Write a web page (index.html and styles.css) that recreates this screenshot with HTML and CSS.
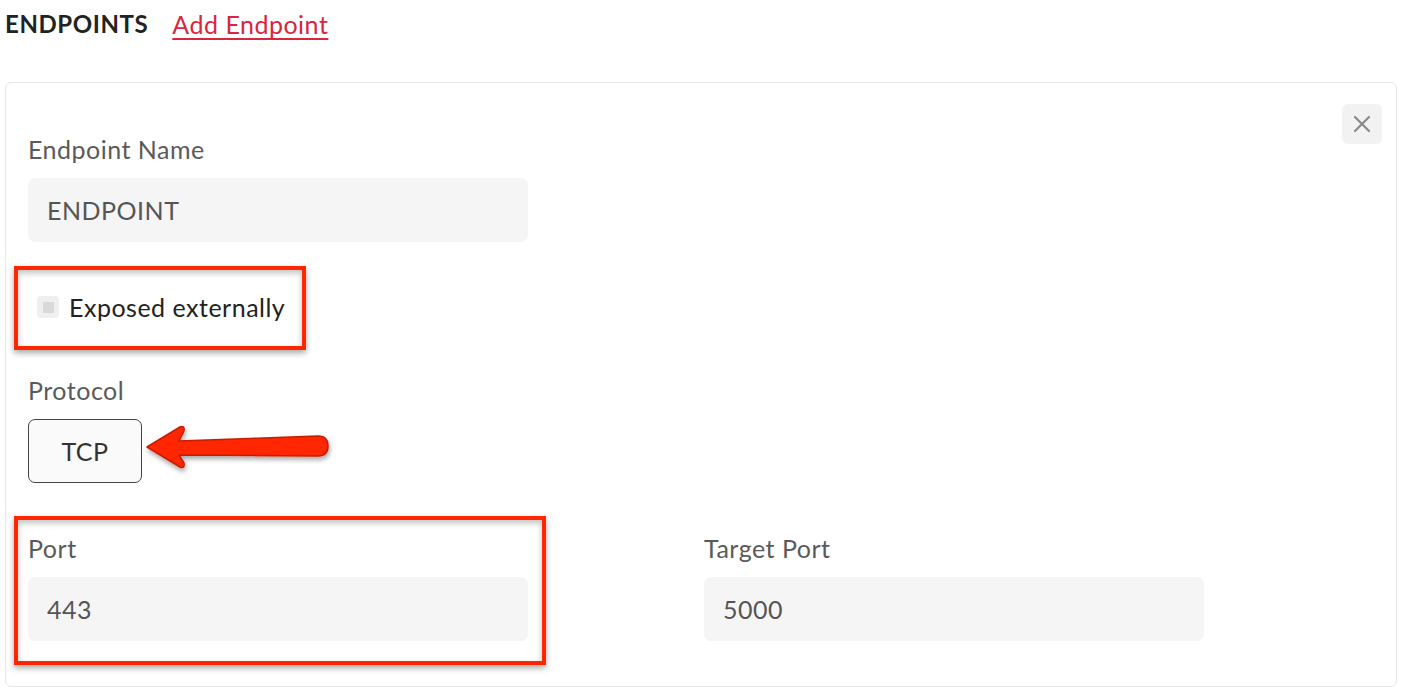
FILE: index.html
```html
<!DOCTYPE html>
<html>
<head>
<meta charset="utf-8">
<link rel="stylesheet" href="styles.css">
</head>
<body>
<div class="page">
  <div class="header">
    <span class="title">ENDPOINTS</span>
    <a class="add-link" href="#">Add Endpoint</a>
  </div>
  <div class="card">
    <button class="close-btn" aria-label="Remove">
      <svg width="18" height="18" viewBox="0 0 18 18"><path d="M2 2 L16 16 M16 2 L2 16" stroke="#8a8a8a" stroke-width="2.2" stroke-linecap="round"/></svg>
    </button>
    <div class="field">
      <label class="label">Endpoint Name</label>
      <input class="input" type="text" value="ENDPOINT" readonly>
    </div>
    <div class="check-row annotated-check">
      <span class="checkbox"><span class="checkbox-dot"></span></span>
      <span class="check-label">Exposed externally</span>
    </div>
    <div class="field protocol-field">
      <label class="label">Protocol</label>
      <div class="proto-wrap">
        <button class="proto-btn">TCP</button>
        <svg class="arrow" width="200" height="60" viewBox="140 420 200 60">
          <defs>
            <filter id="sh" x="-20%" y="-40%" width="140%" height="180%">
              <feDropShadow dx="1" dy="3" stdDeviation="2.5" flood-color="#000" flood-opacity="0.35"/>
            </filter>
          </defs>
          <path filter="url(#sh)" d="M147,448 L180,428 Q185,426 184,432 L179,442 L318,437 Q328,437 328,447 Q328,457 318,457 L179,456 L184,464 Q185,470 180,468 Z" fill="#ff2600" stroke="#c81e00" stroke-width="1.5" stroke-linejoin="round"/>
        </svg>
      </div>
    </div>
    <div class="port-grid">
      <div class="field port-field annotated-port">
        <label class="label">Port</label>
        <input class="input" type="text" value="443" readonly>
      </div>
      <div class="field port-field">
        <label class="label">Target Port</label>
        <input class="input" type="text" value="5000" readonly>
      </div>
    </div>
  </div>
</div>
</body>
</html>
```
FILE: styles.css
```css
* { box-sizing: border-box; }
html, body { margin: 0; padding: 0; background: #fff; }
body {
  font-family: Lato, "Noto Sans", "Liberation Sans", sans-serif;
  font-size: 25px;
  letter-spacing: 0.5px;
  color: #555;
}
.page {
  padding: 9px 7px 0 5px;
}
.header {
  display: flex;
  align-items: center;
  gap: 24px;
  height: 30px;
  margin-bottom: 43px;
}
.title {
  font-weight: 700;
  color: #222;
  font-size: 24px;
  letter-spacing: 0.6px;
  line-height: 30px;
}
.add-link {
  color: #d7263d;
  text-decoration: underline;
  text-underline-offset: 4px;
  text-decoration-thickness: 1.5px;
  line-height: 30px;
}
.card {
  position: relative;
  border: 1px solid #e6e6e6;
  border-radius: 6px;
  padding: 51px 40px 43px 22px;
  height: 605px;
}
.close-btn {
  position: absolute;
  top: 21px;
  right: 14px;
  width: 40px;
  height: 40px;
  border: none;
  border-radius: 6px;
  background: #f2f2f2;
  display: flex;
  align-items: center;
  justify-content: center;
  padding: 0;
}
.field {
  display: flex;
  flex-direction: column;
  gap: 14px;
  position: relative;
}
.label {
  line-height: 30px;
  color: #5a5a5a;
}
.input {
  width: 500px;
  height: 64px;
  border: none;
  border-radius: 7px;
  background: #f5f5f5;
  padding: 0 19px;
  font: inherit;
  letter-spacing: inherit;
  color: #555;
  outline: none;
}
.check-row {
  position: relative;
  display: inline-flex;
  align-items: center;
  gap: 10px;
  height: 30px;
  margin-top: 50px;
  margin-bottom: 53px;
}
.checkbox {
  width: 22px;
  height: 22px;
  margin-left: 9px;
  border-radius: 4px;
  background: #efefef;
  display: flex;
  align-items: center;
  justify-content: center;
}
.checkbox-dot {
  width: 11px;
  height: 11px;
  background: #d9d9d9;
  border-radius: 1px;
}
.check-label {
  color: #222;
  line-height: 30px;
}
.annotated-check::after,
.annotated-port::after {
  content: "";
  position: absolute;
  border: 4px solid #ff2600;
  box-shadow: 0 3px 6px rgba(0,0,0,0.35), inset 0 3px 6px rgba(0,0,0,0.25);
  pointer-events: none;
}
.annotated-check::after {
  left: -14px;
  right: -21px;
  top: -26px;
  bottom: -28px;
}
.annotated-port::after {
  left: -14px;
  right: -18px;
  top: -17px;
  bottom: -24px;
}
.proto-wrap {
  position: relative;
  height: 64px;
}
.proto-btn {
  width: 114px;
  height: 64px;
  border: 1.5px solid #444;
  border-radius: 7px;
  background: #fafafa;
  font: inherit;
  letter-spacing: inherit;
  color: #333;
  padding: 0;
}
.arrow {
  position: absolute;
  left: 112px;
  top: 0;
}
.port-grid {
  display: grid;
  grid-template-columns: 676px 1fr;
  margin-top: 50px;
}
.port-field {
  width: 500px;
}
```
